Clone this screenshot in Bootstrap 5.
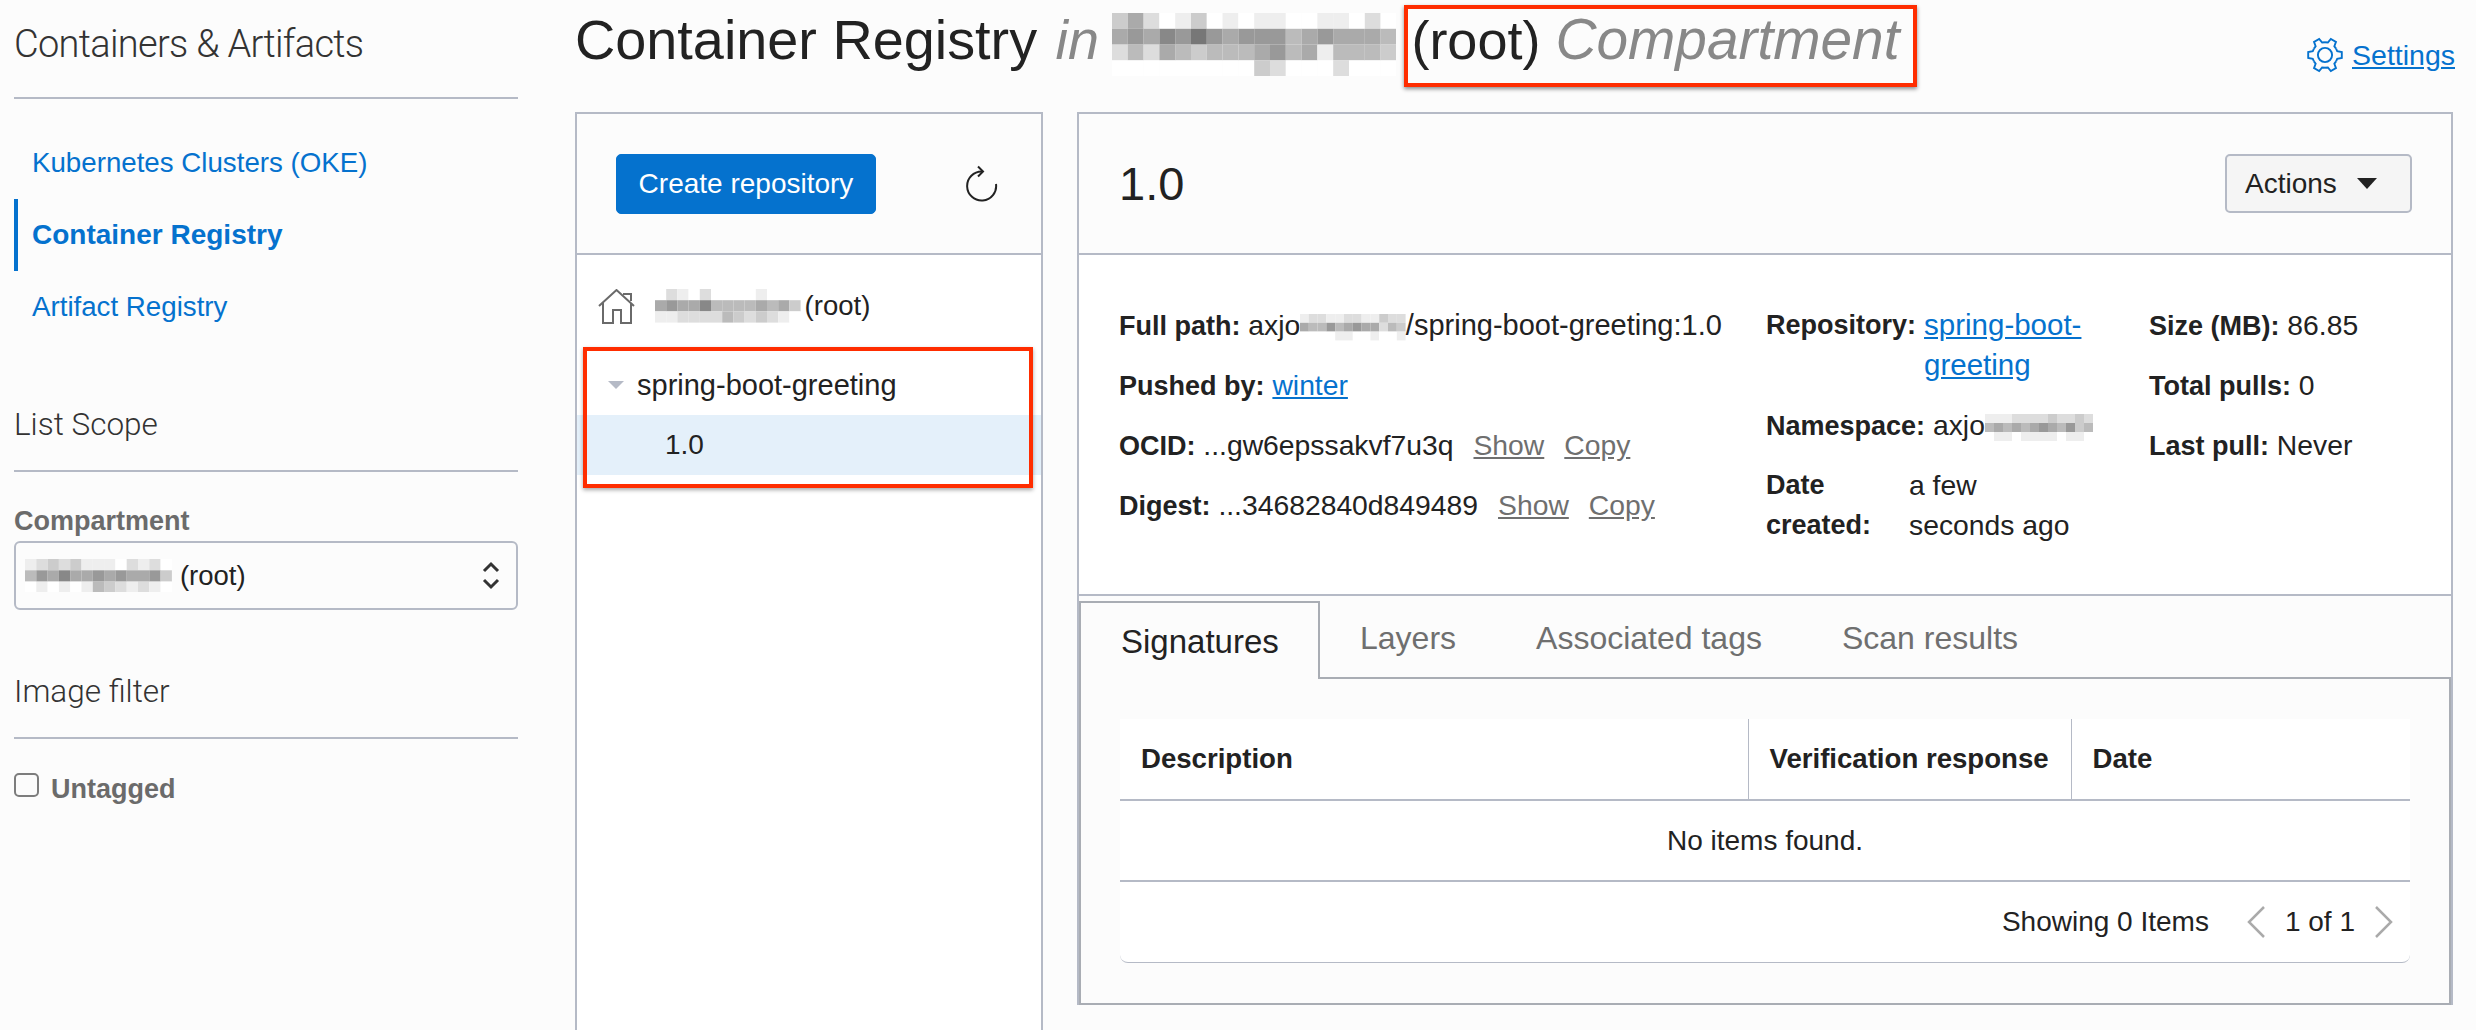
<!DOCTYPE html>
<html lang="en">
<head>
    <meta charset="UTF-8">
    <title>Container Registry</title>
    <link href="https://cdn.jsdelivr.net/npm/bootstrap@5.3.0/dist/css/bootstrap.min.css" rel="stylesheet">
    <script src="https://cdn.jsdelivr.net/npm/bootstrap@5.3.0/dist/js/bootstrap.bundle.min.js"></script>
    <style>
        html { overflow: hidden; }
        body {
            background: #fcfcfc;
            color: #222;
            font-family: "Liberation Sans", Arial, sans-serif;
            font-size: 28px;
            line-height: 40px;
            height: 1030px;
            overflow: hidden;
        }
        a { color: #0572ce; }
        .shell { height: 1030px; }

        /* sidebar */
        .side-col { width: 504px; margin-left: 14px; margin-right: 57px; flex: none; }
        .side-title {
            font-family: "Roboto", "Liberation Sans", sans-serif;
            font-weight: 300;
            color: #333;
            border-bottom: 2px solid #b5bac6;
        }
        .side-title-main { font-size: 38px; letter-spacing: -.7px; line-height: 40px; padding: 24px 0 33px; }
        .side-title-sub { font-size: 31.5px; line-height: 36px; padding-bottom: 27px; margin-top: 64px; }
        .side-nav { padding-top: 28px; }
        .side-link {
            display: flex;
            align-items: center;
            height: 72px;
            padding-left: 14px;
            font-size: 27.7px;
            text-decoration: none;
            border-left: 4px solid transparent;
        }
        .side-link.current { border-left-color: #0572ce; font-weight: 700; font-size: 28px; }
        .field-label { color: #6b6b6b; font-weight: 700; font-size: 27px; line-height: 30px; margin-top: 34px; margin-bottom: 5px; }
        .scope-select {
            height: 69px;
            display: flex;
            align-items: center;
            padding: 0 16px 0 9px;
            background: #fcfcfc none;
            border: 2px solid #b5bac6;
            border-radius: 6px;
            font-size: 27.5px;
            line-height: 40px;
            color: #222;
        }
        .untagged-row { margin-top: 34px; }
        .untagged-row .form-check-input {
            width: 25px;
            height: 24px;
            margin: 0 12px 8px 0;
            background-color: #fcfcfc;
            border: 2px solid #7d7d7d;
            border-radius: 5px;
        }
        .untagged-row label { color: #6b6b6b; font-weight: 700; font-size: 27px; line-height: 30px; }

        /* page title */
        .main-col { width: 1878px; flex: none; }
        .page-head { height: 112px; }
        .page-title { font-size: 55.8px; line-height: 70px; font-weight: 400; margin: 5px 0 0; white-space: nowrap; color: #222; }
        .page-title em { color: #888; }
        .title-scope { margin-left: 3px; margin-right: 13px; }
        .settings-link { margin-top: 37px; margin-right: -2px; font-size: 28.5px; line-height: 30px; }
        .annot-title { position: relative; margin-left: 15px; font-size: 54px; }
        .annot-title em { font-size: 56.8px; }
        .annot-title::after {
            content: "";
            position: absolute;
            left: -7px; right: -17px; top: -5px; bottom: -17px;
            border: 4px solid #ff2d00;
            box-shadow: 0 2px 4px rgba(0, 0, 0, .45);
            pointer-events: none;
        }

        /* panels */
        .pane { border: 2px solid #b5bac6; }
        .pane-tree { width: 468px; height: 918px; flex: none; background: #fff; border-bottom: 0; }
        .pane-detail { width: 1376px; height: 893px; margin-left: 34px; flex: none; background: #fff; border-bottom: 0; }
        .pane-head { height: 141px; background: #fcfcfc; border-bottom: 2px solid #b5bac6; }
        .pane-tree .pane-head { padding: 0 39px 0 39px; }
        .pane-detail .pane-head { padding: 0 39px 0 40px; }
        .btn-create {
            width: 260px;
            height: 60px;
            padding: 0;
            font-size: 28px;
            background: #0572ce;
            border-color: #0572ce;
            border-radius: 5px;
        }
        .version-title { font-size: 47px; line-height: 56px; font-weight: 400; margin: 0; }
        .btn-actions {
            width: 187px;
            height: 59px;
            padding: 0 0 0 18px;
            font-size: 28px;
            color: #222;
            background: #f5f5f5;
            border: 2px solid #b5bac6;
            border-radius: 5px;
            display: flex;
            align-items: center;
        }
        .btn-actions.dropdown-toggle::after {
            margin-left: 20px;
            border-top: 11px solid #222;
            border-right: 10px solid transparent;
            border-left: 10px solid transparent;
            border-bottom: 0;
        }

        /* tree */
        .tree-root { height: 60px; margin-top: 21px; padding-left: 21px; font-size: 27.5px; }
        .tree-root svg.home-icon { margin-right: 20px; }
        .tree-marked { position: relative; margin-top: 19px; }
        .tree-marked::after {
            content: "";
            position: absolute;
            left: 6px; right: 8px; top: -8px; bottom: -13px;
            border: 4px solid #ff2d00;
            box-shadow: 0 2px 4px rgba(0, 0, 0, .35);
            pointer-events: none;
        }
        .tree-repo { height: 60px; padding-left: 31px; font-size: 29px; }
        .tree-caret { border-top: 8px solid #b5bac6; border-left: 8px solid transparent; border-right: 8px solid transparent; margin-right: 13px; }
        .tree-version { height: 60px; padding-left: 88px; background: #e4f0fa; }

        /* details */
        .detail-grid {
            display: grid;
            grid-template-columns: 647px 383px 1fr;
            height: 341px;
            padding: 50px 0 0 40px;
            border-bottom: 2px solid #b5bac6;
            font-size: 28.3px;
        }
        .kv { height: 40px; margin-bottom: 20px; white-space: nowrap; }
        .kv b { font-weight: 700; font-size: 27px; }
        .kv-gray { color: #6f6f6f; margin-left: 20px; }
        .kv-flex { display: flex; height: 80px; }
        .kv-path { font-size: 29px; }
        .kv-repo-val { width: 185px; white-space: normal; margin-left: 8px; font-size: 29.5px; }
        .kv-date-label { width: 143px; white-space: normal; }

        /* tabs */
        .tab-wrap { padding-top: 5px; background: #fcfcfc; }
        .tab-strip { border-bottom: 2px solid #a9adb4; height: 78px; flex-wrap: nowrap; }
        .tab-strip .nav-link {
            border: 0;
            border-radius: 0;
            margin: 0;
            padding: 17px 40px 0 40px;
            height: 70px;
            font-size: 32px;
            color: #6f6f6f;
            background: none;
        }
        .tab-strip .nav-link.active {
            width: 241px;
            height: 78px;
            padding: 19px 0 0 40px;
            font-size: 33px;
            color: #222;
            background: #fcfcfc;
            border-top: 2px solid #a9adb4;
            border-left: 2px solid #a9adb4;
            border-right: 2px solid #a9adb4;
        }
        .tab-body {
            height: 326px;
            padding: 40px 39px 0 39px;
            border: solid #a9adb4;
            border-width: 0 2px 2px 2px;
        }
        .result-box { background: #fff; border-bottom: 1px solid #b5bac6; border-radius: 0 0 8px 8px; height: 244px; }
        .result-table { margin: 0; table-layout: fixed; font-size: 28px; }
        .result-table th, .result-table td { height: 81px; padding: 0 21px; vertical-align: middle; line-height: 40px; border-bottom: 2px solid #b5bac6; background: #fff; color: #222; box-shadow: none; }
        .result-table th { font-size: 27.6px; white-space: nowrap; }
        .result-table th + th { border-left: 1px solid #b5bac6; }
        .result-pager { height: 80px; gap: 19px; padding-right: 17px; }
        .result-pager .pager-count { margin-right: 19px; }

        .mosaic { display: inline-block; vertical-align: middle; flex: none; }
    </style>
</head>
<body>

<div class="shell d-flex">
    <!-- Sidebar -->
    <aside class="side-col">
        <div class="side-title side-title-main">Containers &amp; Artifacts</div>
        <nav class="side-nav">
            <a class="side-link" href="#">Kubernetes Clusters (OKE)</a>
            <a class="side-link current" href="#">Container Registry</a>
            <a class="side-link" href="#">Artifact Registry</a>
        </nav>

        <div class="side-title side-title-sub">List Scope</div>
        <div class="field-label">Compartment</div>
        <div class="form-select scope-select">
            <span class="mosaic me-2" data-cell="11.3" data-rows="edcdceeefdedf,b9a8aa9a9aa9c,fefefebcdedef"></span>
            <span>(root)</span>
            <svg class="ms-auto" width="18" height="29" viewBox="0 0 18 29" fill="none" stroke="#333" stroke-width="3"><path d="M2 10 L9 3 L16 10"/><path d="M2 19 L9 26 L16 19"/></svg>
        </div>

        <div class="side-title side-title-sub">Image filter</div>
        <div class="untagged-row d-flex align-items-center">
            <input class="form-check-input" type="checkbox" id="untagged">
            <label for="untagged">Untagged</label>
        </div>
    </aside>

    <!-- Main -->
    <main class="main-col">
        <div class="page-head d-flex justify-content-between align-items-start">
            <h1 class="page-title">Container Registry <em class="title-scope">in</em><span class="mosaic" data-cell="15.8" data-rows="cadfecfefeeffeefdf,a9a8979a999ba9aaab,dbdabcbbba9baebbbc,fffffffffcdfffdfff"></span><span class="annot-title">(root) <em>Compartment</em></span></h1>
            <a class="settings-link d-flex align-items-center" href="#">
                <svg class="me-2" width="38" height="36" viewBox="-20 -19 40 38" fill="none" stroke="#0572ce" stroke-width="2">
                    <circle r="7.5"/>
                    <g id="tooth"><polyline points="11.69,-6.75 12.91,-3.95 17.73,-3.13 17.73,3.13 12.91,3.95 11.69,6.75"/></g>
                    <use href="#tooth" transform="rotate(60)"/>
                    <use href="#tooth" transform="rotate(120)"/>
                    <use href="#tooth" transform="rotate(180)"/>
                    <use href="#tooth" transform="rotate(240)"/>
                    <use href="#tooth" transform="rotate(300)"/>
                </svg>
                <span class="text-decoration-underline">Settings</span>
            </a>
        </div>

        <div class="d-flex">
            <!-- Repository tree -->
            <section class="pane pane-tree">
                <div class="pane-head d-flex justify-content-between align-items-center">
                    <button type="button" class="btn btn-primary btn-create">Create repository</button>
                    <svg width="36" height="38" viewBox="0 0 36 38" fill="none" stroke="#222" stroke-width="2"><path d="M16 6.5 A14.5 14.5 0 1 0 30 19"/><path d="M12 1.5 L17 6.5 L12 11.5"/></svg>
                </div>
                <div class="tree-root d-flex align-items-center">
                    <svg class="home-icon" width="37" height="35" viewBox="0 0 37 35" fill="none" stroke="#6a6a6a" stroke-width="2"><path d="M1 17 L18.5 1 L36 17"/><path d="M5 14 V34 H15 V21 H23 V34 H33 V14"/><path d="M25 5 H33 V12"/></svg>
                    <span class="mosaic me-1" data-cell="11.2" data-rows="fdefdffffefff,a9aa8bbbbabac,eeddddbcdcdef"></span>
                    <span>(root)</span>
                </div>
                <div class="tree-marked">
                    <div class="tree-repo d-flex align-items-center"><span class="tree-caret"></span>spring-boot-greeting</div>
                    <div class="tree-version d-flex align-items-center">1.0</div>
                </div>
            </section>

            <!-- Image details -->
            <section class="pane pane-detail">
                <div class="pane-head d-flex justify-content-between align-items-center">
                    <h2 class="version-title">1.0</h2>
                    <button type="button" class="btn btn-actions dropdown-toggle">Actions</button>
                </div>

                <div class="detail-grid">
                    <div>
                        <div class="kv"><b>Full path:</b> axjo<span class="mosaic" data-cell="8.8" data-rows="eddeeddeecdd,abb9ba9aadbc,ffffeeffeffe"></span><span class="kv-path">/spring-boot-greeting:1.0</span></div>
                        <div class="kv"><b>Pushed by:</b> <a href="#">winter</a></div>
                        <div class="kv"><b>OCID:</b> ...gw6epssakvf7u3q<a class="kv-gray" href="#">Show</a><a class="kv-gray" href="#">Copy</a></div>
                        <div class="kv"><b>Digest:</b> ...34682840d849489<a class="kv-gray" href="#">Show</a><a class="kv-gray" href="#">Copy</a></div>
                    </div>
                    <div>
                        <div class="kv kv-flex"><b>Repository:</b><a class="kv-repo-val" href="#">spring-boot-greeting</a></div>
                        <div class="kv"><b>Namespace:</b> axjo<span class="mosaic" data-cell="9" data-rows="eeeddddcddcdf,bababa9ab9cbf,feefeeeefeeff"></span></div>
                        <div class="kv kv-flex"><b class="kv-date-label">Date created:</b><span>a few<br>seconds ago</span></div>
                    </div>
                    <div>
                        <div class="kv"><b>Size (MB):</b> 86.85</div>
                        <div class="kv"><b>Total pulls:</b> 0</div>
                        <div class="kv"><b>Last pull:</b> Never</div>
                    </div>
                </div>

                <div class="tab-wrap">
                    <ul class="nav nav-tabs tab-strip">
                        <li class="nav-item"><a class="nav-link active" href="#">Signatures</a></li>
                        <li class="nav-item"><a class="nav-link" href="#">Layers</a></li>
                        <li class="nav-item"><a class="nav-link" href="#">Associated tags</a></li>
                        <li class="nav-item"><a class="nav-link" href="#">Scan results</a></li>
                    </ul>
                    <div class="tab-body">
                        <div class="result-box">
                            <table class="table result-table">
                                <colgroup><col style="width:628px"><col style="width:323px"><col></colgroup>
                                <thead>
                                    <tr><th>Description</th><th>Verification response</th><th>Date</th></tr>
                                </thead>
                                <tbody>
                                    <tr><td colspan="3" class="text-center">No items found.</td></tr>
                                </tbody>
                            </table>
                            <div class="result-pager d-flex justify-content-end align-items-center">
                                <span class="pager-count">Showing 0 Items</span>
                                <svg width="19" height="32" viewBox="0 0 19 32" fill="none" stroke="#aaa" stroke-width="2.5"><path d="M17 1 L2 16 L17 31"/></svg>
                                <span>1 of 1</span>
                                <svg width="19" height="32" viewBox="0 0 19 32" fill="none" stroke="#aaa" stroke-width="2.5"><path d="M2 1 L17 16 L2 31"/></svg>
                            </div>
                        </div>
                    </div>
                </div>
            </section>
        </div>
    </main>
</div>

<script>
    // Pixelated name blocks: each row is a string of grey levels
    document.querySelectorAll('.mosaic').forEach(function (el) {
        const cell = parseFloat(el.dataset.cell);
        const rows = el.dataset.rows.split(',');
        const cols = rows[0].length;
        const ns = 'http://www.w3.org/2000/svg';
        const svg = document.createElementNS(ns, 'svg');
        svg.setAttribute('width', cols * cell);
        svg.setAttribute('height', rows.length * cell);
        svg.style.display = 'block';
        rows.forEach(function (row, y) {
            row.split('').forEach(function (c, x) {
                const rect = document.createElementNS(ns, 'rect');
                rect.setAttribute('x', x * cell);
                rect.setAttribute('y', y * cell);
                rect.setAttribute('width', cell);
                rect.setAttribute('height', cell);
                rect.setAttribute('fill', '#' + c + c + c);
                svg.appendChild(rect);
            });
        });
        el.appendChild(svg);
    });
</script>
</body>
</html>
